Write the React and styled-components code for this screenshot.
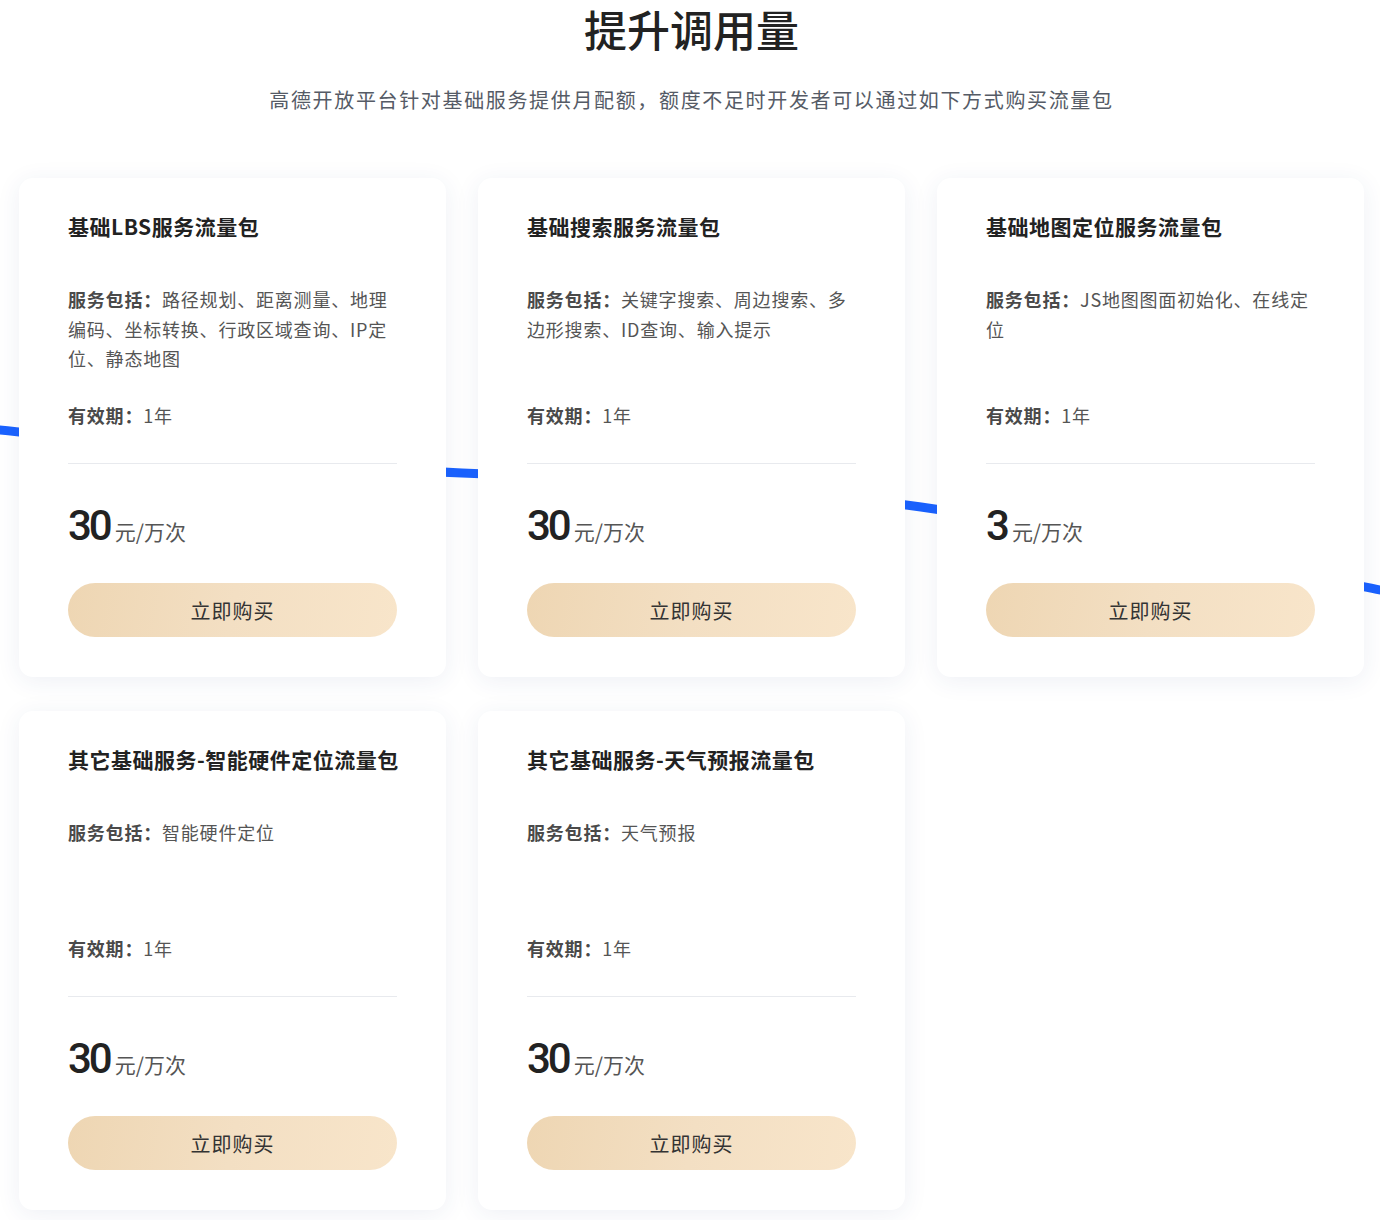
import React from "react";
import styled, { createGlobalStyle } from "styled-components";

const GlobalStyle = createGlobalStyle`
  html, body {
    margin: 0;
    padding: 0;
    background: #ffffff;
  }
  body {
    font-family: "Noto Sans CJK SC", "Noto Sans", sans-serif;
    color: #333;
  }
  * { box-sizing: border-box; }
`;

const Page = styled.div`
  position: relative;
  width: 1380px;
  padding: 0 16px 40px 19px;
`;

const Wave = styled.svg`
  position: absolute;
  left: 0;
  top: 0;
  width: 1380px;
  height: 700px;
  z-index: 0;
  pointer-events: none;
`;

const Header = styled.header`
  display: flex;
  flex-direction: column;
  align-items: center;
  padding-top: 3px;
`;

const Heading = styled.h1`
  margin: 0;
  font-size: 43px;
  line-height: 50px;
  font-weight: 500;
  color: #222;
`;

const Subtitle = styled.p`
  margin: 35px 0 0;
  font-size: 20px;
  line-height: 24px;
  letter-spacing: 1.65px;
  color: #555b66;
`;

const Grid = styled.section`
  position: relative;
  z-index: 1;
  margin-top: 66px;
  display: grid;
  grid-template-columns: repeat(3, 427px);
  column-gap: 32px;
  row-gap: 34px;
`;

const Card = styled.article`
  background: #fff;
  border-radius: 14px;
  box-shadow: 0 4px 24px rgba(40, 70, 130, 0.08);
  padding: 36px 49px 40px;
  display: flex;
  flex-direction: column;
  height: 499px;
`;

const Title = styled.h3`
  margin: 0;
  font-size: 21px;
  line-height: 24px;
  letter-spacing: 0.5px;
  font-weight: 700;
  color: #222;
  white-space: nowrap;
`;

const Info = styled.p`
  margin: ${(p) => p.$mt || "0"} 0 0;
  font-size: 18px;
  line-height: 29.5px;
  letter-spacing: 0.8px;
  color: #555;
  min-height: ${(p) => p.$minH || "auto"};
`;

const Label = styled.span`
  font-weight: 700;
  color: #4a4a4a;
`;

const Divider = styled.hr`
  margin: 32px 0 0;
  border: none;
  border-top: 1px solid #e8eaee;
  width: 100%;
`;

const PriceRow = styled.div`
  margin-top: 42px;
  display: flex;
  align-items: baseline;
  gap: 5px;
  height: 40px;
`;

const Amount = styled.span`
  font-family: Roboto, "Noto Sans", sans-serif;
  font-size: 42px;
  line-height: 40px;
  font-weight: 500;
  letter-spacing: -3px;
  color: #222;
`;

const Unit = styled.span`
  font-size: 21px;
  line-height: 24px;
  color: #555;
`;

const BuyButton = styled.button`
  margin-top: auto;
  width: 100%;
  height: 54px;
  border: none;
  border-radius: 27px;
  background: linear-gradient(100deg, #eed6b3 0%, #f3dfc3 50%, #f8e5ca 100%);
  font-family: "Noto Sans CJK SC", sans-serif;
  font-size: 20px;
  letter-spacing: 1px;
  color: #333;
  cursor: pointer;
`;

const packages = [
  {
    title: "基础LBS服务流量包",
    services: "路径规划、距离测量、地理编码、坐标转换、行政区域查询、IP定位、静态地图",
    price: "30",
  },
  {
    title: "基础搜索服务流量包",
    services: "关键字搜索、周边搜索、多边形搜索、ID查询、输入提示",
    price: "30",
  },
  {
    title: "基础地图定位服务流量包",
    services: "JS地图图面初始化、在线定位",
    price: "3",
  },
  {
    title: "其它基础服务-智能硬件定位流量包",
    services: "智能硬件定位",
    price: "30",
  },
  {
    title: "其它基础服务-天气预报流量包",
    services: "天气预报",
    price: "30",
  },
];

export default function App() {
  return (
    <>
      <GlobalStyle />
      <Page>
        <Wave viewBox="0 0 1380 700" xmlns="http://www.w3.org/2000/svg">
          <path
            d="M-10 429 C 150 446, 330 468, 462 473 C 620 480, 800 490, 921 507 C 1100 533, 1280 570, 1390 592"
            fill="none"
            stroke="#1a62ff"
            strokeWidth="9"
          />
        </Wave>
        <Header>
          <Heading>提升调用量</Heading>
          <Subtitle>高德开放平台针对基础服务提供月配额，额度不足时开发者可以通过如下方式购买流量包</Subtitle>
        </Header>
        <Grid>
          {packages.map((p) => (
            <Card key={p.title}>
              <Title>{p.title}</Title>
              <Info $mt="47px" $minH="89px">
                <Label>服务包括：</Label>
                {p.services}
              </Info>
              <Info $mt="27px">
                <Label>有效期：</Label>1年
              </Info>
              <Divider />
              <PriceRow>
                <Amount>{p.price}</Amount>
                <Unit>元/万次</Unit>
              </PriceRow>
              <BuyButton>立即购买</BuyButton>
            </Card>
          ))}
        </Grid>
      </Page>
    </>
  );
}
